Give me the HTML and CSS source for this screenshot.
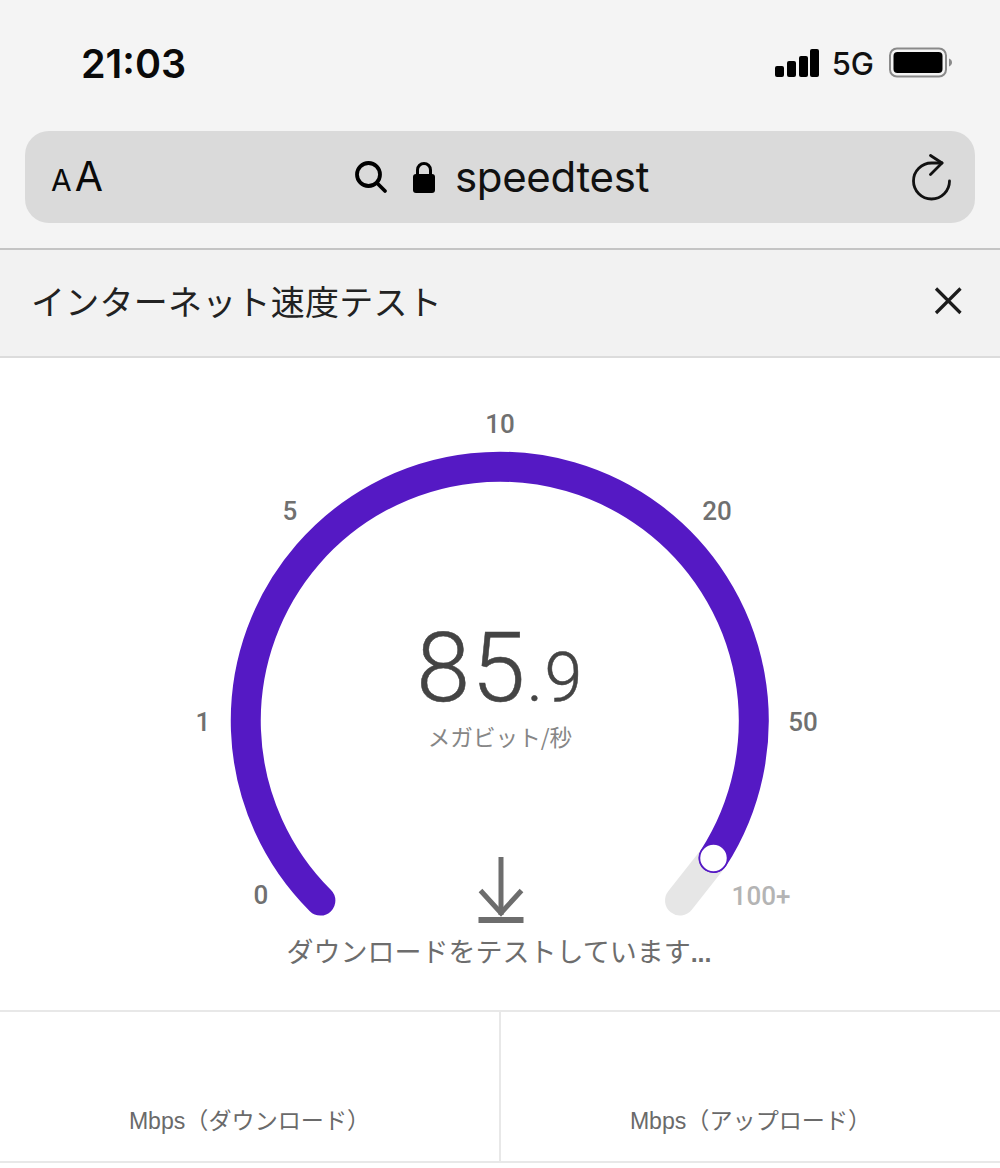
FILE: index.html
```html
<!DOCTYPE html>
<html lang="ja">
<head>
<meta charset="utf-8">
<title>speedtest</title>
<link rel="stylesheet" href="styles.css">
</head>
<body>
<header class="chrome">
  <div class="status">
    <span class="time">21:03</span>
    <div class="status-right">
      <svg class="signal" width="44" height="30" viewBox="0 0 44 30"><rect x="0" y="17" width="9" height="11" rx="2"/><rect x="12" y="12" width="9" height="16" rx="2"/><rect x="24" y="7" width="9" height="21" rx="2"/><rect x="35" y="0" width="9" height="28" rx="2"/></svg>
      <span class="net">5G</span>
      <svg class="battery" width="64" height="32" viewBox="0 0 64 32"><rect x="1" y="1.500" width="56" height="28" rx="7" fill="none" stroke="#8a8a8a" stroke-width="2"/><rect x="4.500" y="5" width="49" height="21" rx="4"/><path d="M60 11.500c2 .8 3 2.200 3 4s-1 3.200-3 4z" fill="#8a8a8a"/></svg>
    </div>
  </div>
  <div class="address">
    <span class="aa"><span class="aa-s">A</span>A</span>
    <div class="addr-mid">
      <svg class="search" width="34" height="34" viewBox="0 0 34 34" fill="none" stroke="#000" stroke-width="3.800" stroke-linecap="round"><circle cx="14.500" cy="14.500" r="11.500"/><path d="M23 23l8 8"/></svg>
      <svg width="24" height="34" viewBox="0 0 24 34"><path d="M5.500 15v-5a6.500 6.500 0 0 1 13 0v5" fill="none" stroke="#000" stroke-width="3"/><rect x="1" y="14" width="22" height="19" rx="3"/></svg>
      <span class="host">speedtest</span>
    </div>
    <svg class="reload" width="40" height="48" viewBox="0 0 40 48" fill="none" stroke="#111" stroke-width="2.800" stroke-linecap="round" stroke-linejoin="round"><path d="M31 9H20.500A18 18 0 1 0 38.500 27"/><path d="M19.500 1.500L31 9l-11.500 11.500"/></svg>
  </div>
</header>
<section class="titlebar">
  <h1 class="title">インターネット速度テスト</h1>
  <svg width="28" height="28" viewBox="0 0 28 28" stroke="#1c1c1c" stroke-width="3.200"><path d="M2 1.500l24.500 24.500M26.500 1.500L2 26"/></svg>
</section>
<main class="content">
  <div class="gauge">
    <svg class="dial" width="1000" height="654" viewBox="0 358 1000 654" fill="none" stroke-linecap="round" stroke-width="30">
      <path d="M713.500 858L680 900.500" stroke="#e6e6e6"/>
      <path d="M320.400 900.600A254 254 0 1 1 713.500 858" stroke="#5519c4"/>
      <circle cx="713.500" cy="858" r="14" fill="#fff" stroke="#5519c4" stroke-width="1.500"/>
      <g stroke="#6d6d6d" stroke-linecap="butt">
        <path d="M501 857v58" stroke-width="5"/>
        <path d="M480.500 890.500L501 913l20.500-22.500" stroke-width="5"/>
        <path d="M478.500 920h45" stroke-width="6"/>
      </g>
    </svg>
    <span class="tick t0">0</span>
    <span class="tick t1">1</span>
    <span class="tick t5">5</span>
    <span class="tick t10">10</span>
    <span class="tick t20">20</span>
    <span class="tick t50">50</span>
    <span class="tick t100">100+</span>
    <div class="reading">
      <div class="value">85<small>.9</small></div>
      <div class="unit">メガビット/秒</div>
    </div>
    <div class="message">ダウンロードをテストしています<span class="dots">...</span></div>
  </div>
  <div class="results">
    <div class="cell">Mbps（ダウンロード）</div>
    <div class="cell">Mbps（アップロード）</div>
  </div>
</main>
</body>
</html>
```
FILE: styles.css
```css
* { box-sizing: border-box; }
html, body { margin: 0; padding: 0; background: #fff; }
body { width: 1000px; height: 1168px; overflow: hidden; font-family: "Liberation Sans", "Noto Sans CJK JP", sans-serif; }

.chrome { height: 250px; background: #f4f4f4; border-bottom: 2px solid #c4c4c4; padding: 0 25px; }
.status { height: 131px; display: flex; justify-content: space-between; padding: 40px 22px 0 56px; align-items: flex-start; }
.time { font: 600 39.500px/48px Inter, "Liberation Sans", sans-serif; color: #0a0a0a; }
.status-right { display: flex; align-items: center; gap: 14px; height: 48px; }
.signal { fill: #000; }
.net { font: 500 31px/36px Inter, "Liberation Sans", sans-serif; color: #111; margin-left: -1px; margin-right: 1px; }
.battery { fill: #000; margin-top: -3px; }

.address { height: 92px; border-radius: 24px; background: #dadada; display: flex; align-items: center; padding: 0 24px 0 26px; position: relative; }
.aa { font: 400 41px/48px Inter, "Liberation Sans", sans-serif; color: #0a0a0a; width: 80px; margin-top: 2px; white-space: nowrap; }
.aa-s { font-size: 30px; margin-right: 3px; }
.addr-mid { flex: 1; display: flex; align-items: center; justify-content: center; gap: 15px; padding-right: 39px; }
.addr-mid svg { flex: none; }
.addr-mid .search { margin-right: 9px; }
.host { font: 400 42px/50px Inter, "Liberation Sans", sans-serif; color: #111; letter-spacing: -.3px; margin-left: 4px; }
.reload { margin-top: 2px; }

.titlebar { height: 108px; background: #f2f2f2; border-bottom: 2px solid #dcdcdc; display: flex; align-items: center; justify-content: space-between; padding: 0 38px 4px 31px; }
.title { margin: 0; font: 400 34px/44px "Noto Sans CJK JP", sans-serif; color: #222; letter-spacing: .25px; }

.content { background: #fff; }
.gauge { height: 654px; position: relative; border-bottom: 2px solid #e8e8e8; }
.dial { display: block; position: absolute; left: 0; top: 0; }
.tick { position: absolute; width: 80px; text-align: center; font: 500 26px/30px Roboto, "Liberation Sans", sans-serif; color: #707070; }
.t0 { left: 221px; top: 522px; }
.t1 { left: 163px; top: 349px; }
.t5 { left: 250px; top: 138px; }
.t10 { left: 460px; top: 51px; }
.t20 { left: 677px; top: 138px; }
.t50 { left: 763px; top: 349px; }
.t100 { left: 721px; top: 523px; color: #b4b4b4; }
.reading { position: absolute; left: 0; right: 0; top: 268px; text-align: center; color: #444; }
.value { font: 340 97px/84px Roboto, "Liberation Sans", sans-serif; letter-spacing: 1.500px; -webkit-text-stroke: .5px #444; }
.value small { font-size: 68px; }
.unit { font: 400 22.600px/34px "Noto Sans CJK JP", sans-serif; color: #868686; }
.message { position: absolute; left: 0; right: 0; top: 574px; padding-right: 2px; text-align: center; font: 400 27px/38px "Noto Sans CJK JP", sans-serif; color: #6d6d6d; }
.dots { font: 700 25px/38px "Liberation Sans", sans-serif; }

.results { height: 151px; display: grid; grid-template-columns: 501px 499px; border-bottom: 2px solid #e8e8e8; }
.cell { display: flex; align-items: flex-end; justify-content: center; padding-bottom: 23px; font: 400 23.100px/34px "Liberation Sans", "Noto Sans CJK JP", sans-serif; color: #6a6a6a; }
.cell:first-child { border-right: 2px solid #e8e8e8; }
```
